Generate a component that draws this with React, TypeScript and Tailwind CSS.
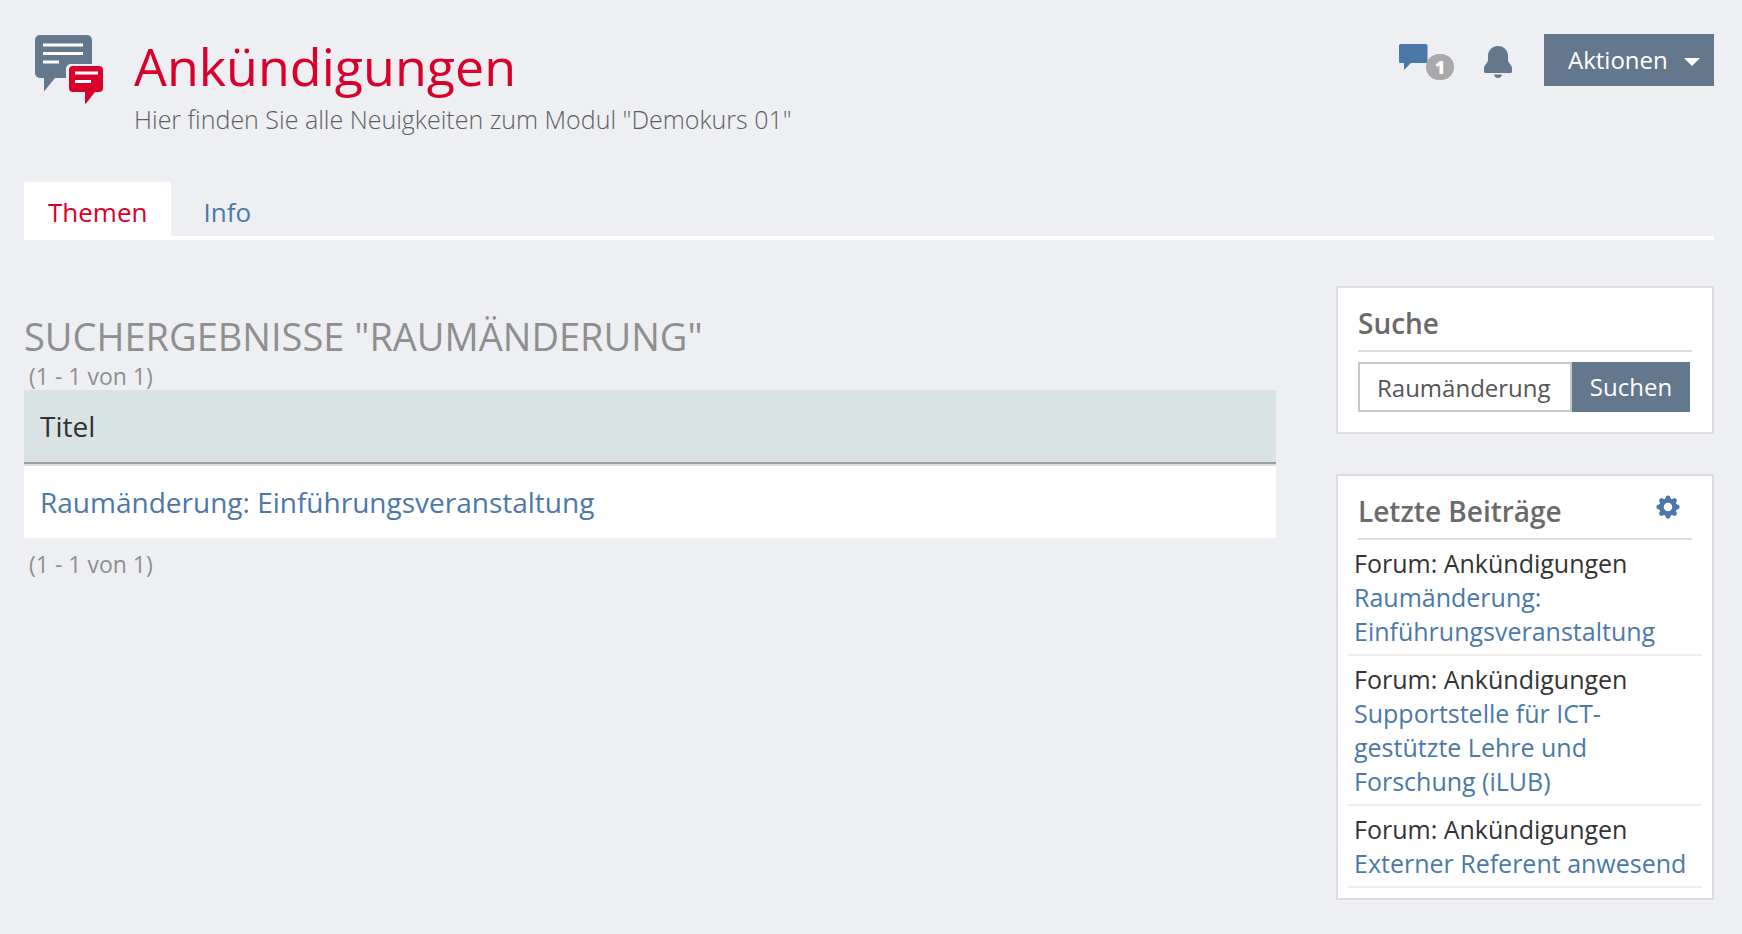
interface Post {
  forum: string;
  title: string;
}

const posts: Post[] = [
  { forum: "Ankündigungen", title: "Raumänderung: Einführungsveranstaltung" },
  {
    forum: "Ankündigungen",
    title: "Supportstelle für ICT-gestützte Lehre und Forschung (iLUB)",
  },
  { forum: "Ankündigungen", title: "Externer Referent anwesend" },
];

const results = ["Raumänderung: Einführungsveranstaltung"];

function ForumIcon() {
  return (
    <svg width="70" height="70" viewBox="0 0 70 70" aria-hidden="true" className="shrink-0">
      <path
        d="M5 0H48a5 5 0 0 1 5 5V29H36a5 5 0 0 0-5 5V43H20L9 56.500V43H5a5 5 0 0 1-5-5V5a5 5 0 0 1 5-5Z"
        fill="#63788d"
      />
      <path d="M50 0H52a5 5 0 0 1 5 5V29H50Z" fill="#63788d" />
      <path d="M8 10H48M8 18.500H48M8 27H24" stroke="#fff" strokeWidth="3" />
      <path
        d="M38 31H64a4 4 0 0 1 4 4V53a4 4 0 0 1-4 4H60L51 68.500H50V57H38a4 4 0 0 1-4-4V35a4 4 0 0 1 4-4Z"
        fill="#d9002b"
      />
      <path d="M40 38H63M40 46.500H56" stroke="#fff" strokeWidth="3" />
    </svg>
  );
}

function CommentIcon() {
  return (
    <svg width="29" height="27" viewBox="0 0 29 27" aria-hidden="true">
      <path
        d="M1.500 0H27a1.500 1.500 0 0 1 1.500 1.500V17.500a1.500 1.500 0 0 1-1.500 1.500H12L5 26V19H1.500A1.500 1.500 0 0 1 0 17.500V1.500A1.500 1.500 0 0 1 1.500 0Z"
        fill="#4c78a9"
      />
    </svg>
  );
}

function BellIcon() {
  return (
    <svg width="28" height="32" viewBox="0 0 28 32" aria-hidden="true">
      <path
        d="M14 0C20 0 24 4.500 24 10V14C24 17 28 19 28 22V25.500Q28 27 26.500 27H1.500Q0 27 0 25.500V22C0 19 4 17 4 14V10C4 4.500 8 0 14 0ZM10 28.500H18C17.500 31 16 32 14 32S10.500 31 10 28.500Z"
        fill="#63788d"
      />
    </svg>
  );
}

function GearIcon() {
  return (
    <svg width="24" height="24" viewBox="-12 -12 24 24" aria-hidden="true" fill="#4c78a9">
      <circle r="6.500" fill="none" stroke="#4c78a9" strokeWidth="4.500" />
      {[0, 45, 90, 135, 180, 225, 270, 315].map((angle) => (
        <path
          key={angle}
          d="M-3.200-7.500L-1.800-11Q0-12.200 1.800-11L3.200-7.500Z"
          transform={`rotate(${angle})`}
        />
      ))}
    </svg>
  );
}

function Header() {
  return (
    <header className="flex items-start justify-between pl-[11px]">
      <div className="flex gap-[29px]">
        <div className="pt-[5px]">
          <ForumIcon />
        </div>
        <div>
          <h1 className="text-[52px] leading-[72px] text-[#d9002b]">Ankündigungen</h1>
          <p className="text-[25px] leading-[34px] font-light text-[#5f5f5f]">
            Hier finden Sie alle Neuigkeiten zum Modul "Demokurs 01"
          </p>
        </div>
      </div>
      <div className="flex items-start pt-1">
        <a href="#kommentare" aria-label="Kommentare" className="relative mt-[10px] mr-[56px]">
          <CommentIcon />
          <span className="absolute top-[10px] left-[27px] flex h-[26px] w-[28px] items-center justify-center rounded-full bg-[#a9a9a9] text-[18px] font-extrabold text-white">
            1
          </span>
        </a>
        <button type="button" aria-label="Benachrichtigungen" className="mt-3 mr-8">
          <BellIcon />
        </button>
        <button
          type="button"
          className="flex h-[52px] w-[170px] items-center justify-between bg-[#63788d] pr-[14px] pl-6 text-[24px] font-medium text-white"
        >
          Aktionen
          <svg width="16" height="8" viewBox="0 0 16 8" aria-hidden="true" className="mt-1">
            <path d="M0 0H16L8 8Z" fill="currentColor" />
          </svg>
        </button>
      </div>
    </header>
  );
}

function ResultTable() {
  return (
    <main className="min-w-0 flex-1 pt-6">
      <h2 className="text-[38px] leading-[52px] text-[#8f8f8f] uppercase">
        Suchergebnisse "Raumänderung"
      </h2>
      <p className="pl-[5px] text-[23px] leading-7 text-[#8f8f8f]">(1 - 1 von 1)</p>
      <table className="w-full border-separate border-spacing-0 text-left text-[28px] leading-10">
        <thead>
          <tr className="bg-[#dae3e4]">
            <th className="h-[74px] border-b-2 border-[#9f9d9f] px-4 py-0 font-normal text-[#333333]">
              Titel
            </th>
          </tr>
        </thead>
        <tbody>
          {results.map((result) => (
            <tr key={result} className="bg-white">
              <td className="h-[74px] border-t-2 border-[#dddddd] px-4 py-0">
                <a href="#thema" className="text-[#4c78a9]">
                  {result}
                </a>
              </td>
            </tr>
          ))}
        </tbody>
      </table>
      <p className="pt-3 pl-[5px] text-[23px] leading-7 text-[#8f8f8f]">(1 - 1 von 1)</p>
    </main>
  );
}

function SearchBox() {
  return (
    <section className="border-2 border-[#dcdcdc] bg-white px-5 pb-5">
      <h3 className="flex h-16 items-center border-b-2 border-[#dcdcdc] pt-2 text-[28px] font-semibold text-[#6a6a6a]">
        Suche
      </h3>
      <form className="flex pt-[10px] pr-[2px]">
        <input
          type="text"
          aria-label="Suche"
          defaultValue="Raumänderung"
          className="h-[50px] min-w-0 flex-1 border-2 border-[#c8c8c8] bg-white pl-[17px] text-[24px] text-[#555555]"
        />
        <button
          type="button"
          className="h-[50px] w-[118px] bg-[#63788d] text-[24px] font-medium text-white"
        >
          Suchen
        </button>
      </form>
    </section>
  );
}

function LatestPosts() {
  return (
    <section className="border-2 border-[#dcdcdc] bg-white px-[10px] pb-[10px]">
      <div className="mx-[10px] flex h-16 items-center justify-between border-b-2 border-[#dcdcdc] pr-3">
        <h3 className="pt-2 text-[28px] font-semibold text-[#6a6a6a]">Letzte Beiträge</h3>
        <button type="button" aria-label="Einstellungen">
          <GearIcon />
        </button>
      </div>
      <ul className="text-[25px] leading-[34px]">
        {posts.map((post) => (
          <li key={post.title} className="border-b-2 border-[#eeeeee] p-[6px]">
            <div className="text-[#333333]">Forum: {post.forum}</div>
            <a href="#beitrag" className="block text-[#4c78a9]">
              {post.title}
            </a>
          </li>
        ))}
      </ul>
    </section>
  );
}

export default function App() {
  return (
    <div className="min-h-screen bg-[#edeff3] px-6 pt-[30px] pb-[34px] pr-7 font-['Open_Sans',sans-serif]">
      <Header />
      <nav className="mt-[46px] flex border-b-4 border-white text-[26px] leading-[48px]">
        <a href="#themen" className="bg-white px-6 pt-[6px] text-[#d9002b]">
          Themen
        </a>
        <a href="#info" className="px-8 pt-[6px] text-[#4c78a9]">
          Info
        </a>
      </nav>
      <div className="mt-[46px] flex items-start gap-[60px]">
        <ResultTable />
        <aside className="flex w-[378px] shrink-0 flex-col gap-10">
          <SearchBox />
          <LatestPosts />
        </aside>
      </div>
    </div>
  );
}
